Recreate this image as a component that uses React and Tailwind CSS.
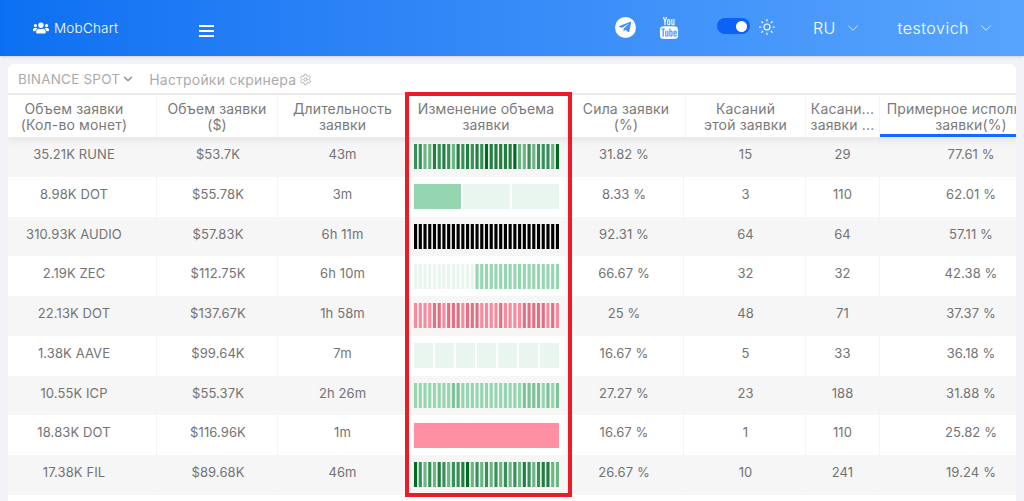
import React from "react";
import { FaUsers, FaChevronDown, FaTelegramPlane } from "react-icons/fa";
import { TfiYoutube } from "react-icons/tfi";
import { Sun, ChevronDown, Settings } from "lucide-react";

const font = { fontFamily: "Inter, 'Noto Sans', sans-serif" };

const palette = {
  a: "#006b1f",
  b: "#1f7f3f",
  c: "#359059",
  d: "#6cb585",
  e: "#95d5b0",
  f: "#7cc398",
  p: "#e9f5ef",
  k: "#000000",
  r: "#f98a9e",
  s: "#e36f85",
  t: "#ff8fa3",
};

const rows = [
  ["35.21K RUNE", "$53.7K", "43m", "ccddbcbcdbcbcbcabbbbbaddcdcccda", "31.82 %", "15", "29", "77.61 %"],
  ["8.98K DOT", "$55.78K", "3m", "epp", "8.33 %", "3", "110", "62.01 %"],
  ["310.93K AUDIO", "$57.83K", "6h 11m", "kkkkkkkkkkkkkkkkkkkkkkkkkkkkkkk", "92.31 %", "64", "64", "57.11 %"],
  ["2.19K ZEC", "$112.75K", "6h 10m", "pppppppppppppeeeeeeeeeeeeeeeeee", "66.67 %", "32", "32", "42.38 %"],
  ["22.13K DOT", "$137.67K", "1h 58m", "rrrrssrsssrsssrrrrsrrrrsssssrsr", "25 %", "48", "71", "37.37 %"],
  ["1.38K AAVE", "$99.64K", "7m", "ppppppp", "16.67 %", "5", "33", "36.18 %"],
  ["10.55K ICP", "$55.37K", "2h 26m", "eeeeeeeeffeeeeeeeeeeeeeffffefef", "27.27 %", "23", "188", "31.88 %"],
  ["18.83K DOT", "$116.96K", "1m", "t", "16.67 %", "1", "110", "25.82 %"],
  ["17.38K FIL", "$89.68K", "46m", "acdcdbcdccbadcdcdcdcdcdbcdcbbdd", "26.67 %", "10", "241", "19.24 %"],
];

const columns = "grid grid-cols-[149px_121px_128px_161px_119px_120px_74px_182px] w-[1054px]";

function Bar({ pattern }) {
  const n = pattern.length;
  const gap = n > 7 ? 1.6 : n > 1 ? 2 : 0;
  const w = (145 - gap * (n - 1)) / n;
  return (
    <svg width="145" height="25" viewBox="0 0 145 25" className="block">
      {pattern.split("").map((c, i) => (
        <rect key={i} x={i * (w + gap)} y="0" width={w} height="25" fill={palette[c]} />
      ))}
    </svg>
  );
}

function HeadCell({ children, active, border = true, extra = "" }) {
  return (
    <div
      className={`relative flex flex-col items-center justify-center h-[42px] pt-[2px] text-[14px] leading-[16px] text-[#7a7a7a] text-center whitespace-nowrap tracking-[0.15px] ${
        border ? "border-r border-[#f4f4f4]" : ""
      } ${extra}`}
    >
      {children}
      {active && <div className="absolute left-0 w-[136px] bottom-0 h-[3px] bg-[#0d6efd]" />}
    </div>
  );
}

function Cell({ children, border = true, extra = "pb-[4px]" }) {
  return (
    <div
      className={`flex items-center justify-center text-[13px] text-[#737373] tracking-[0.1px] ${
        border ? "border-r border-[#f4f4f4]" : ""
      } ${extra}`}
    >
      {children}
    </div>
  );
}

export default function App() {
  return (
    <div className="relative w-[1024px] h-[501px] overflow-hidden bg-[#f1f3f8]" style={font}>
      <header className="flex items-center h-[56px] bg-gradient-to-r from-[#0a70f2] to-[#57a4fd] text-white shadow-sm">
        <div className="flex items-center gap-[5px] w-[199px] pl-[33px] text-[13.5px] font-light">
          <FaUsers className="text-[16px]" />
          <span className="tracking-[0.2px]">MobChart</span>
        </div>
        <div className="flex flex-col gap-[3px] w-[15px] pt-[6px]">
          <div className="h-[2px] bg-white" />
          <div className="h-[2px] bg-white" />
          <div className="h-[2px] bg-white" />
        </div>
        <div className="flex items-center justify-center w-[21px] h-[21px] ml-[401px] mb-[2px] rounded-full bg-white text-[#3f8ff8]">
          <FaTelegramPlane className="text-[14px] -ml-[1px]" />
        </div>
        <TfiYoutube size={22} className="ml-[22px] -mt-[1px] shrink-0" />
        <div className="flex items-center justify-end w-[33px] h-[16px] ml-[37px] rounded-full bg-[#0d62f5] pr-[3px] mb-[4px]">
          <div className="w-[11px] h-[11px] rounded-full bg-white" />
        </div>
        <Sun size={18} strokeWidth={1.5} className="ml-[8px] mb-[3px]" />
        <div className="flex items-center ml-[37px] text-[16px] font-light tracking-[0.3px]">
          <span>RU</span>
          <ChevronDown size={18} strokeWidth={1} className="ml-[8px]" />
        </div>
        <div className="flex items-center ml-[36px] text-[16px] font-light tracking-[0.5px]">
          <span>testovich</span>
          <ChevronDown size={18} strokeWidth={1} className="ml-[8px]" />
        </div>
      </header>

      <div className="mt-[8px] ml-[8px] w-[1008px] h-[437px] rounded-t-md bg-white overflow-hidden">
        <div className="flex items-center h-[31px] pl-[10px] pt-[1px] border-b-2 border-[#eeeeee] text-[13.5px] text-[#ababab] tracking-[0.2px]">
          <span>BINANCE SPOT</span>
          <FaChevronDown className="text-[10px] ml-[3px] text-[#999]" />
          <span className="ml-[16px] text-[14px] tracking-[0.2px]">Настройки скринера</span>
          <Settings size={13} strokeWidth={1.75} className="ml-[3px]" />
        </div>

        <div className={`${columns} shadow-[0_3px_8px_rgba(0,0,0,0.08)] relative z-10 bg-white`}>
          <HeadCell extra="pr-[16px]">
            <span>Объем заявки</span>
            <span>(Кол-во монет)</span>
          </HeadCell>
          <HeadCell>
            <span>Объем заявки</span>
            <span>($)</span>
          </HeadCell>
          <HeadCell extra="pl-[2px]">
            <span>Длительность</span>
            <span>заявки</span>
          </HeadCell>
          <HeadCell>
            <span>Изменение объема</span>
            <span>заявки</span>
          </HeadCell>
          <HeadCell>
            <span>Сила заявки</span>
            <span>(%)</span>
          </HeadCell>
          <HeadCell>
            <span>Касаний</span>
            <span>этой заявки</span>
          </HeadCell>
          <HeadCell>
            <span>Касани...</span>
            <span>заявки ...</span>
          </HeadCell>
          <HeadCell active border={false}>
            <span>Примерное исполнение</span>
            <span>заявки(%)</span>
          </HeadCell>
        </div>

        {rows.map((r, i) => (
          <div key={i} className={`${columns} h-[39.75px] ${i % 2 === 0 ? "bg-[#f6f6f6]" : "bg-white"}`}>
            <Cell extra="pb-[4px] pr-[16px]">{r[0]}</Cell>
            <Cell extra="pb-[4px] pl-[2px]">{r[1]}</Cell>
            <Cell extra="pb-[4px] pl-[2px]">{r[2]}</Cell>
            <Cell extra="">
              <Bar pattern={r[3]} />
            </Cell>
            <Cell extra="pb-[4px] -translate-x-[2px]">{r[4]}</Cell>
            <Cell>{r[5]}</Cell>
            <Cell>{r[6]}</Cell>
            <Cell border={false}>{r[7]}</Cell>
          </div>
        ))}
      </div>

      <div className="absolute left-[405px] top-[92px] w-[167px] h-[405px] border-4 border-[#ed1c24] pointer-events-none z-20" />
    </div>
  );
}
